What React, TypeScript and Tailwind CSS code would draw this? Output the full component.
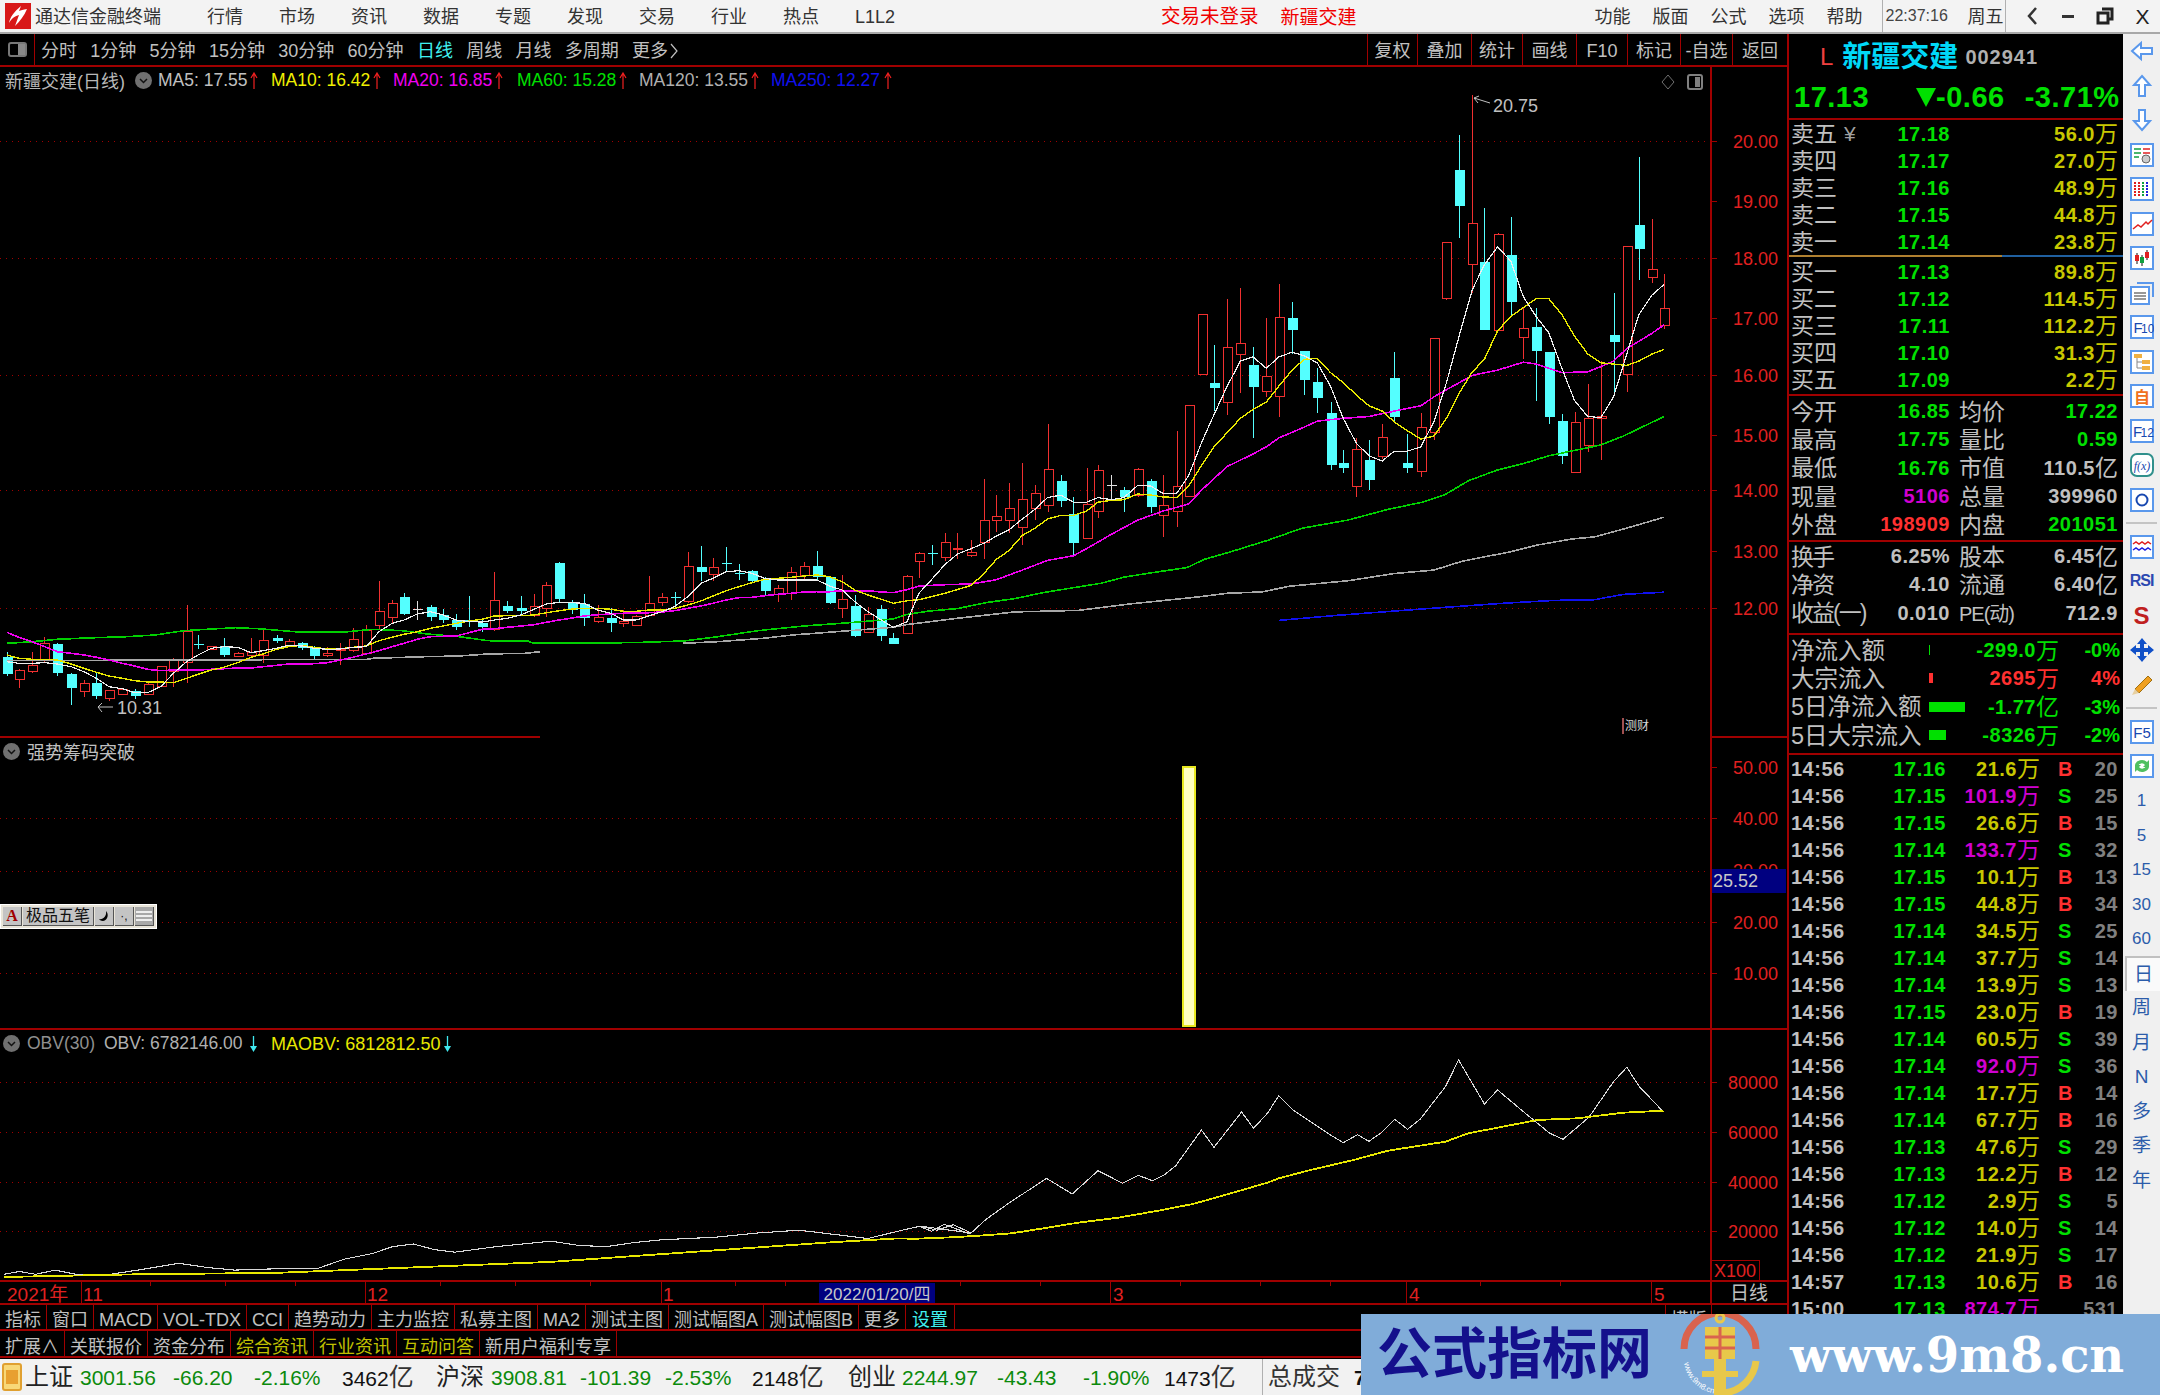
import type { ReactNode } from 'react'

type Candle = [number, 'r' | 'c' | 'w', number, number, number, number]
type Pt = [number, number]

const RED = '#f03030'
const CYAN = '#54ffff'
const LINE = 'border-[#a00000]'

// candles read off the left and right half of the chart, in crop coordinates
const leftCandles: Candle[] = [
  [12, 'c', 335, 352, 402, 408], [33, 'r', 388, 390, 418, 445], [56, 'r', 335, 375, 395, 400],
  [76, 'r', 290, 310, 362, 365], [100, 'c', 310, 312, 400, 408], [124, 'c', 400, 402, 445, 495],
  [146, 'r', 420, 430, 455, 472], [168, 'c', 395, 428, 468, 478], [190, 'r', 452, 452, 476, 482],
  [213, 'r', 445, 447, 462, 464], [235, 'c', 447, 452, 468, 478], [257, 'r', 430, 434, 462, 464],
  [280, 'r', 378, 380, 440, 442], [302, 'r', 355, 357, 395, 440], [325, 'r', 195, 275, 366, 430],
  [345, 'c', 285, 312, 314, 328], [368, 'r', 318, 320, 328, 330], [390, 'c', 293, 318, 346, 352],
  [414, 'r', 335, 340, 350, 352], [437, 'r', 293, 338, 345, 348], [458, 'r', 270, 300, 345, 370],
  [482, 'c', 285, 293, 302, 310], [503, 'r', 298, 303, 315, 320], [526, 'c', 305, 308, 325, 330],
  [547, 'c', 318, 322, 347, 358], [570, 'r', 320, 340, 345, 352], [593, 'r', 310, 328, 332, 375],
  [615, 'r', 265, 298, 330, 335], [638, 'r', 255, 270, 340, 345], [660, 'r', 122, 214, 255, 268],
  [683, 'r', 180, 190, 232, 248], [704, 'c', 158, 172, 222, 225], [727, 'w', 182, 208, 210, 240],
  [750, 'c', 195, 200, 230, 242], [772, 'c', 208, 225, 240, 248], [795, 'c', 222, 240, 262, 270],
  [817, 'c', 167, 240, 244, 262], [840, 'c', 235, 250, 262, 275], [861, 'r', 96, 182, 268, 272],
  [884, 'c', 182, 198, 213, 218], [907, 'c', 167, 204, 213, 228], [930, 'r', 163, 198, 225, 230],
  [952, 'r', 125, 137, 205, 230], [974, 'c', 67, 68, 178, 190], [997, 'c', 180, 188, 210, 222],
  [1018, 'c', 163, 192, 235, 257], [1041, 'r', 195, 232, 243, 250], [1064, 'c', 205, 235, 248, 275],
  [1086, 'r', 210, 245, 250, 262], [1108, 'r', 226, 228, 256, 258], [1130, 'r', 108, 190, 225, 228],
  [1153, 'r', 158, 172, 188, 198], [1175, 'c', 155, 172, 174, 205], [1198, 'r', 37, 78, 185, 188],
  [1221, 'c', 18, 82, 95, 122], [1242, 'r', 55, 82, 103, 122], [1265, 'c', 22, 68, 71, 95],
  [1287, 'c', 72, 99, 102, 120], [1310, 'c', 90, 92, 122, 125], [1332, 'c', 110, 120, 153, 168],
  [1355, 'r', 135, 146, 162, 185], [1378, 'r', 82, 96, 160, 180], [1400, 'r', 65, 78, 105, 120],
  [1423, 'c', 32, 78, 110, 122], [1445, 'c', 108, 110, 190, 193], [1467, 'r', 105, 177, 205, 235],
  [1489, 'c', 165, 198, 288, 292], [1512, 'r', 200, 222, 278, 280], [1535, 'c', 195, 208, 288, 302],
  [1556, 'c', 280, 294, 311, 312],
]

const rightCandles: Candle[] = [
  [12, 'r', 1390, 1392, 1552, 1552], [33, 'r', 1325, 1328, 1350, 1398], [56, 'c', 1305, 1326, 1330, 1360],
  [78, 'r', 1270, 1298, 1340, 1350], [100, 'r', 1272, 1315, 1318, 1345], [124, 'r', 1290, 1326, 1335, 1337],
  [146, 'r', 1120, 1236, 1298, 1345], [168, 'r', 1165, 1224, 1236, 1268], [190, 'r', 1130, 1202, 1236, 1270],
  [213, 'r', 1075, 1176, 1255, 1305], [235, 'r', 1138, 1160, 1202, 1235], [257, 'r', 965, 1092, 1194, 1212],
  [280, 'c', 1108, 1125, 1182, 1198], [302, 'c', 1170, 1218, 1300, 1337], [325, 'r', 1090, 1190, 1286, 1288],
  [345, 'r', 1082, 1096, 1210, 1228], [368, 'w', 1108, 1138, 1140, 1178], [390, 'c', 1142, 1150, 1170, 1212],
  [414, 'r', 1088, 1092, 1166, 1170], [437, 'c', 1120, 1125, 1198, 1215], [458, 'r', 1108, 1195, 1222, 1283],
  [482, 'r', 985, 1142, 1210, 1254], [503, 'r', 915, 915, 1168, 1170], [526, 'r', 660, 660, 828, 830],
  [547, 'c', 746, 852, 866, 930], [570, 'r', 615, 752, 905, 942], [593, 'r', 586, 740, 770, 880],
  [615, 'c', 750, 802, 862, 1005], [638, 'r', 670, 832, 875, 890], [660, 'r', 575, 668, 890, 945],
  [683, 'c', 625, 668, 704, 770], [704, 'c', 762, 762, 842, 885], [727, 'c', 810, 848, 892, 935],
  [750, 'c', 905, 936, 1082, 1095], [772, 'c', 1038, 1075, 1090, 1103], [795, 'r', 1005, 1038, 1140, 1170],
  [817, 'c', 1012, 1068, 1123, 1150], [840, 'r', 965, 1004, 1058, 1065], [861, 'c', 764, 836, 945, 960],
  [884, 'c', 995, 1075, 1090, 1102], [907, 'r', 935, 975, 1098, 1115], [930, 'r', 727, 727, 990, 1010],
  [952, 'r', 458, 458, 615, 620], [974, 'c', 158, 256, 356, 445], [997, 'r', 45, 404, 518, 600],
  [1018, 'c', 360, 512, 704, 704], [1041, 'r', 432, 434, 704, 706], [1064, 'c', 385, 492, 624, 660],
  [1086, 'r', 640, 698, 724, 785], [1108, 'c', 640, 693, 762, 902], [1130, 'c', 764, 764, 946, 965],
  [1153, 'c', 937, 958, 1055, 1078], [1175, 'r', 932, 962, 1102, 1102], [1198, 'r', 855, 950, 1025, 1045],
  [1221, 'r', 790, 946, 950, 1068], [1243, 'c', 600, 718, 737, 880], [1266, 'r', 470, 470, 828, 876],
  [1287, 'c', 217, 410, 477, 562], [1310, 'r', 393, 534, 555, 570], [1331, 'r', 545, 643, 690, 700],
]

const ma5A: Pt[] = [[12, 365], [33, 370], [56, 370], [78, 368], [100, 372], [124, 380], [146, 395], [168, 415], [190, 440], [213, 446], [235, 458], [257, 458], [280, 440], [302, 400], [325, 365], [345, 345], [368, 325], [390, 320], [414, 322], [437, 338], [458, 332], [482, 325], [503, 316], [526, 318], [547, 325], [570, 328], [593, 327], [615, 322], [638, 320], [660, 275], [683, 250], [704, 240], [727, 222], [750, 215], [772, 225], [795, 240], [817, 245], [840, 246], [861, 240], [884, 235], [907, 225], [930, 208], [952, 192], [974, 187], [997, 188], [1018, 190], [1041, 210], [1064, 220], [1086, 240], [1108, 240], [1130, 228], [1153, 215], [1175, 200], [1198, 170], [1221, 130], [1242, 115], [1265, 95], [1287, 92], [1310, 100], [1332, 115], [1355, 120], [1378, 120], [1400, 120], [1423, 120], [1445, 138], [1467, 150], [1489, 185], [1512, 215], [1535, 240], [1556, 262]]
const ma5B: Pt[] = [[12, 1520], [33, 1440], [56, 1400], [78, 1360], [100, 1330], [124, 1315], [146, 1300], [168, 1280], [190, 1262], [213, 1232], [235, 1205], [257, 1172], [280, 1165], [302, 1185], [325, 1185], [345, 1172], [368, 1178], [390, 1172], [414, 1138], [437, 1140], [458, 1160], [482, 1160], [503, 1110], [526, 1015], [547, 940], [570, 860], [593, 790], [615, 778], [638, 810], [660, 778], [683, 765], [704, 775], [727, 795], [750, 860], [772, 950], [795, 1020], [817, 1055], [840, 1070], [861, 1042], [884, 1042], [907, 1030], [930, 960], [952, 850], [974, 720], [997, 590], [1018, 520], [1041, 470], [1064, 510], [1086, 610], [1108, 665], [1130, 710], [1153, 810], [1175, 900], [1198, 945], [1221, 948], [1243, 890], [1266, 770], [1287, 660], [1310, 605], [1331, 575]]
const ma10A: Pt[] = [[12, 345], [33, 355], [56, 358], [78, 358], [100, 360], [124, 372], [146, 385], [168, 397], [190, 408], [213, 415], [235, 422], [257, 426], [280, 426], [302, 428], [325, 415], [345, 403], [368, 390], [390, 382], [414, 368], [437, 352], [458, 342], [482, 328], [503, 320], [526, 316], [547, 322], [570, 327], [593, 326], [615, 322], [638, 318], [660, 302], [683, 292], [704, 283], [727, 275], [750, 265], [772, 258], [795, 250], [817, 243], [840, 238], [861, 228], [884, 227], [907, 227], [930, 225], [952, 218], [974, 212], [997, 207], [1018, 205], [1041, 205], [1064, 208], [1086, 214], [1108, 214], [1130, 210], [1153, 210], [1175, 205], [1198, 195], [1221, 183], [1242, 168], [1265, 152], [1287, 140], [1310, 128], [1332, 118], [1355, 115], [1378, 112], [1400, 108], [1423, 105], [1445, 110], [1467, 125], [1489, 150], [1512, 165], [1535, 178], [1556, 190]]
const ma10B: Pt[] = [[12, 1461], [33, 1458], [78, 1440], [124, 1418], [146, 1385], [168, 1345], [190, 1320], [213, 1278], [235, 1258], [257, 1232], [280, 1222], [302, 1222], [325, 1210], [345, 1185], [368, 1180], [390, 1178], [414, 1162], [437, 1165], [458, 1170], [482, 1172], [503, 1140], [526, 1080], [547, 1030], [570, 990], [593, 950], [615, 925], [638, 905], [660, 860], [683, 815], [704, 785], [727, 782], [750, 822], [772, 850], [795, 885], [817, 915], [840, 930], [861, 960], [884, 985], [907, 1008], [930, 1000], [952, 950], [974, 880], [997, 820], [1018, 785], [1041, 705], [1064, 665], [1086, 640], [1108, 615], [1130, 615], [1153, 660], [1175, 720], [1198, 770], [1221, 795], [1243, 798], [1266, 802], [1287, 790], [1310, 770], [1331, 757]]
const ma20A: Pt[] = [[12, 277], [33, 292], [56, 305], [78, 320], [100, 335], [124, 340], [146, 345], [168, 352], [190, 360], [213, 370], [235, 378], [257, 388], [280, 392], [302, 390], [325, 390], [345, 390], [368, 388], [390, 386], [414, 384], [437, 384], [458, 380], [482, 376], [503, 372], [526, 372], [547, 371], [570, 368], [593, 360], [615, 352], [638, 342], [660, 332], [683, 320], [704, 310], [727, 298], [750, 290], [772, 289], [795, 288], [817, 278], [840, 268], [861, 266], [884, 262], [907, 258], [930, 254], [952, 247], [974, 240], [997, 234], [1018, 228], [1041, 224], [1064, 222], [1086, 220], [1108, 218], [1130, 218], [1153, 216], [1175, 212], [1198, 205], [1221, 198], [1242, 190], [1265, 180], [1287, 173], [1310, 172], [1332, 167], [1355, 163], [1378, 160], [1400, 156], [1423, 155], [1445, 155], [1467, 152], [1489, 152], [1512, 152], [1535, 156], [1556, 158]]
const ma20B: Pt[] = [[12, 1430], [33, 1420], [78, 1416], [124, 1414], [168, 1402], [213, 1375], [257, 1348], [302, 1335], [325, 1315], [368, 1275], [414, 1235], [458, 1210], [503, 1190], [526, 1150], [570, 1085], [615, 1050], [638, 1030], [660, 1005], [704, 975], [727, 958], [772, 950], [817, 945], [861, 930], [907, 915], [930, 890], [952, 870], [997, 830], [1041, 815], [1086, 793], [1108, 798], [1130, 810], [1153, 822], [1198, 820], [1221, 805], [1243, 790], [1266, 755], [1310, 712], [1331, 688]]
const ma60A: Pt[] = [[12, 310], [50, 306], [100, 298], [150, 294], [220, 290], [270, 285], [320, 272], [360, 268], [410, 263], [450, 266], [520, 276], [600, 276], [650, 268], [700, 272], [745, 282], [800, 290], [850, 302], [920, 303], [925, 308], [1030, 310], [1120, 307], [1190, 303], [1250, 290], [1320, 272], [1400, 258], [1480, 248], [1556, 237]]
const ma60B: Pt[] = [[10, 1500], [50, 1490], [100, 1483], [150, 1466], [200, 1455], [250, 1438], [300, 1425], [350, 1412], [390, 1395], [440, 1382], [500, 1368], [530, 1345], [580, 1322], [640, 1292], [700, 1258], [780, 1235], [850, 1205], [910, 1185], [950, 1163], [990, 1125], [1040, 1095], [1090, 1075], [1130, 1055], [1175, 1040], [1220, 1025], [1260, 1000], [1331, 945]]
const ma120A1: Pt[] = [[12, 362], [640, 358], [650, 355], [740, 350], [800, 348], [850, 342], [915, 340], [940, 335]]
const ma120A2: Pt[] = [[1190, 310], [1250, 305], [1330, 295], [1380, 285], [1480, 272], [1556, 262]]
const ma120B: Pt[] = [[10, 1528], [100, 1510], [200, 1492], [310, 1488], [400, 1470], [520, 1450], [570, 1440], [630, 1436], [680, 1420], [780, 1405], [860, 1385], [930, 1375], [980, 1350], [1060, 1325], [1110, 1305], [1170, 1288], [1210, 1282], [1265, 1258], [1331, 1227]]
const ma250B: Pt[] = [[660, 1516], [760, 1502], [860, 1490], [960, 1478], [1050, 1468], [1140, 1460], [1210, 1458], [1260, 1443], [1331, 1437]]

const obvLeft: Pt[] = [[3, 925], [14, 923], [26, 925], [40, 922], [55, 925], [80, 925], [100, 922], [130, 917], [150, 920], [170, 922], [200, 921], [230, 921], [250, 914], [270, 910], [285, 905], [300, 903], [315, 907], [330, 909], [360, 905], [400, 901], [420, 904], [440, 905], [460, 902], [480, 900], [500, 899], [520, 898], [550, 895], [580, 893], [605, 896], [630, 899], [655, 893], [668, 890], [680, 893], [692, 889], [705, 895]]
const obvRight: Pt[] = [[33, 588], [55, 604], [77, 583], [122, 612], [150, 568], [185, 525], [255, 445], [300, 492], [345, 422], [388, 460], [415, 436], [440, 452], [460, 435], [480, 408], [525, 300], [547, 352], [595, 246], [616, 295], [640, 250], [660, 197], [683, 238], [750, 315], [772, 338], [797, 314], [817, 334], [840, 306], [862, 268], [884, 298], [906, 268], [950, 170], [973, 90], [1018, 222], [1041, 180], [1088, 248], [1132, 310], [1155, 328], [1200, 262], [1243, 155], [1266, 112], [1288, 170], [1328, 242]]
const maobvLeft: Pt[] = [[3, 927], [100, 925], [200, 924], [300, 920], [400, 916], [500, 909], [600, 902], [650, 899]]
const maobvRight: Pt[] = [[30, 626], [90, 622], [130, 618], [195, 610], [250, 595], [310, 578], [380, 563], [450, 542], [510, 522], [560, 498], [640, 458], [660, 445], [710, 422], [790, 390], [850, 362], [950, 335], [990, 310], [1050, 290], [1110, 270], [1180, 265], [1260, 248], [1330, 242]]

const ax = (z: number) => z / 1.742
const ay = (z: number) => 540 + z / 3
const bx = (z: number) => 900 + z / 1.742
const by = (z: number) => 79 + z / 2.8
const a = (p: Pt[]) => p.map(([x, y]): Pt => [ax(x), ay(y)])
const b = (p: Pt[]) => p.map(([x, y]): Pt => [bx(x), by(y)])
const obvB = (p: Pt[]) => p.map(([x, y]): Pt => [bx(x), 1030 + y / 3])
const shrunk = (p: Pt[]) => p.map(([x, y]): Pt => [x * 1.3776, y * 1.3776])
const pts = (p: Pt[]) => p.map(([x, y]) => `${x.toFixed(1)},${y.toFixed(1)}`).join(' ')

function Line({ p, color, w = 1.2 }: { p: Pt[]; color: string; w?: number }) {
  return <polyline points={pts(p)} fill="none" stroke={color} strokeWidth={w} shapeRendering="crispEdges" />
}

function Bar({ c, fx, fy }: { c: Candle; fx: (n: number) => number; fy: (n: number) => number }) {
  const [zx, kind, hi, top, bot, lo] = c
  const x = Math.round(fx(zx))
  const y1 = fy(top)
  const y2 = fy(bot)
  const color = kind === 'r' ? RED : kind === 'c' ? CYAN : '#e0e0e0'
  return (
    <g shapeRendering="crispEdges">
      <line x1={x + 0.5} x2={x + 0.5} y1={fy(hi)} y2={y1} stroke={color} />
      <line x1={x + 0.5} x2={x + 0.5} y1={y2} y2={fy(lo)} stroke={color} />
      {kind === 'r' ? (
        <rect x={x - 4} y={y1} width={9} height={Math.max(y2 - y1, 1)} fill="#000" stroke={color} />
      ) : (
        <rect x={x - 4.5} y={y1} width={10} height={Math.max(y2 - y1, 1)} fill={color} />
      )}
    </g>
  )
}

function Grid({ lines, labels, right = 1711 }: { lines: number[]; labels: [string, number][]; right?: number }) {
  return (
    <>
      {lines.map((y) => (
        <line key={y} x1={0} x2={right} y1={y} y2={y} stroke="#a00000" strokeDasharray="1 5" shapeRendering="crispEdges" />
      ))}
      {labels.map(([t, y]) => (
        <g key={t}>
          <line x1={1711} x2={1717} y1={y} y2={y} stroke="#a00000" shapeRendering="crispEdges" />
          <text x={1778} y={y + 6.5} textAnchor="end" fontSize={18} fill="#e02020">{t}</text>
        </g>
      ))}
    </>
  )
}

function PaneHeader({ children }: { children: ReactNode }) {
  return <div className="absolute left-0 top-0 flex items-center h-[27px] text-[17.5px] leading-none whitespace-nowrap">{children}</div>
}

function Dot() {
  return (
    <span className="w-[17px] h-[17px] rounded-full bg-[#707070] flex items-center justify-center shrink-0">
      <svg width="11" height="11" viewBox="0 0 11 11"><path d="M2 4l3.5 3.5L9 4" fill="none" stroke="#111" strokeWidth="1.5" /></svg>
    </span>
  )
}

function Up() {
  return <svg width="8" height="18" viewBox="0 0 8 18" className="shrink-0"><path d="M4 17V2M1 6l3-5 3 5" fill="none" stroke="#f02020" strokeWidth="1.2" /></svg>
}

function Down({ color }: { color: string }) {
  return <svg width="9" height="18" viewBox="0 0 9 18" className="shrink-0"><path d="M4.5 1v12" stroke={color} strokeWidth="1.3" /><path d="M1 11h7l-3.5 6z" fill={color} /></svg>
}

function TitleBar() {
  const menu = ['行情', '市场', '资讯', '数据', '专题', '发现', '交易', '行业', '热点', 'L1L2']
  const right = ['功能', '版面', '公式', '选项', '帮助']
  return (
    <div className="h-[34px] bg-[#f3f3f3] border-b-2 border-[#a8a8a8] flex items-center text-[18px] leading-none text-[#333] whitespace-nowrap">
      <svg width="26" height="26" viewBox="0 0 26 26" className="ml-[5px] shrink-0">
        <rect width="26" height="26" fill="#d81818" />
        <path d="M16 3C9 9 5 14 4 20c3-5 6-7 10-8l-4 11c5-5 9-10 12-17-4 1-6 1-8 2z" fill="#fff" />
      </svg>
      <span className="ml-[4px] w-[126px] pt-[2px]">通达信金融终端</span>
      <div className="ml-[46px] flex gap-[36px] pt-[2px]">
        {menu.map((m) => <span key={m} className="w-[36px]">{m}</span>)}
      </div>
      <span className="ml-[270px] pt-[2px] text-[#f00000] text-[19.5px]">交易未登录</span>
      <span className="ml-[22px] pt-[2px] text-[#f00000] text-[19px]">新疆交建</span>
      <div className="ml-[238px] flex gap-[22px] pt-[2px]">
        {right.map((m) => <span key={m}>{m}</span>)}
      </div>
      <div className="ml-[19px] h-[32px] border-x border-[#b0b0b0] w-[124px] flex items-center pl-[3px]">
        <span className="text-[16px] w-[82px] text-[#444]">22:37:16</span>
        <span className="pt-[2px]">周五</span>
      </div>
      <div className="flex items-center text-[#222] font-bold">
        <svg width="14" height="22" viewBox="0 0 14 22" className="ml-[20px]"><path d="M10 3L3 11l7 8" fill="none" stroke="#333" strokeWidth="2.5" /></svg>
        <span className="ml-[22px] w-[12px] h-[3px] bg-[#333]" />
        <svg width="20" height="20" viewBox="0 0 20 20" className="ml-[21px]"><path d="M7 3h10v10h-4M3 7h10v10H3z" fill="none" stroke="#222" strokeWidth="3" /></svg>
        <span className="ml-[21px] text-[21px] font-normal">X</span>
      </div>
    </div>
  )
}

function Toolbar() {
  const periods = ['分时', '1分钟', '5分钟', '15分钟', '30分钟', '60分钟', '日线', '周线', '月线', '多周期']
  const tools: [string, string][] = [['复权', 'w-[50px]'], ['叠加', 'w-[54px]'], ['统计', 'w-[51px]'], ['画线', 'w-[54px]'], ['F10', 'w-[51px]'], ['标记', 'w-[53px]'], ['-自选', 'w-[52px]'], ['返回', 'w-[55px]']]
  return (
    <div className={`h-[33px] shrink-0 border-b-2 ${LINE} flex items-center text-[18px] leading-none text-[#c0c0c0] whitespace-nowrap`}>
      <div className={`w-[35px] h-full border-r ${LINE} flex items-center justify-center`}>
        <span className="w-[19px] h-[15px] border-2 border-[#777] rounded-[3px] flex justify-end">
          <span className="w-[7px] h-full bg-[#888]" />
        </span>
      </div>
      <div className="ml-[6px] pt-[3px] flex items-center gap-[13.3px]">
        {periods.map((p) => <span key={p} className={p === '日线' ? 'text-[#40f0f0]' : ''}>{p}</span>)}
        <span className="flex items-center">
          更多
          <svg width="9" height="16" viewBox="0 0 9 16" className="ml-[2px]"><path d="M1 1l6 7-6 7" fill="none" stroke="#c0c0c0" strokeWidth="1.2" /></svg>
        </span>
      </div>
      <div className="ml-auto flex h-full">
        {tools.map(([t, w]) => (
          <span key={t} className={`${w} pt-[3px] border-l ${LINE} flex items-center justify-center`}>{t}</span>
        ))}
      </div>
    </div>
  )
}

function MainPane() {
  const labels: [string, number][] = [['20.00', 141], ['19.00', 201], ['18.00', 258], ['17.00', 318], ['16.00', 375], ['15.00', 435], ['14.00', 490], ['13.00', 551], ['12.00', 608]]
  return (
    <div className="relative h-[671px] shrink-0">
      <svg width="1787" height="671" viewBox="0 67 1787 671" className="block [font-family:'Liberation_Sans',sans-serif]">
        <Grid lines={[141, 258, 375, 490, 608]} labels={labels} />
        {leftCandles.map((c) => <Bar key={`a${c[0]}`} c={c} fx={ax} fy={ay} />)}
        {rightCandles.map((c) => <Bar key={`b${c[0]}`} c={c} fx={bx} fy={by} />)}
        <Line p={a(ma120A1)} color="#a8a8a8" w={1.6} />
        <Line p={[...a(ma120A2), ...b(ma120B)]} color="#a8a8a8" w={1.6} />
        <Line p={b(ma250B)} color="#1010f0" w={1.6} />
        <Line p={[...a(ma60A), ...b(ma60B)]} color="#00d000" w={1.6} />
        <Line p={[...a(ma20A), ...b(ma20B)]} color="#f000f0" w={1.6} />
        <Line p={[...a(ma10A), ...b(ma10B)]} color="#e8e800" w={1.4} />
        <Line p={[...a(ma5A), ...b(ma5B)]} color="#eeeeee" w={1.2} />
        <path d="M1490 103l-16-5m0 0l4 5m-4-5l5-2" fill="none" stroke="#c0c0c0" />
        <text x={1493} y={112} fontSize={18} fill="#c0c0c0">20.75</text>
        <path d="M113 707H98m0 0l4-4m-4 4l4 5" fill="none" stroke="#c0c0c0" />
        <text x={117} y={714} fontSize={18} fill="#c0c0c0">10.31</text>
        <line x1={0} x2={540} y1={737} y2={737} stroke="#a00000" strokeWidth={2} />
        <line x1={1711} x2={1787} y1={737} y2={737} stroke="#a00000" strokeWidth={2} />
        <line x1={1711} x2={1711} y1={67} y2={738} stroke="#a00000" strokeWidth={2} />
        <path d="M1668 75l6 7-6 7-6-7z" fill="none" stroke="#707070" />
        <rect x={1688} y={75} width={14} height={14} rx={2} fill="none" stroke="#808080" strokeWidth={2} />
        <rect x={1695} y={77} width={5} height={10} fill="#808080" />
      </svg>
      <PaneHeader>
        <span className="ml-[5px] pt-[2px] text-[18px] text-[#b8b8b8]">新疆交建(日线)</span>
        <span className="ml-[10px] mr-[6px]"><Dot /></span>
        <span className="text-[#c0c0c0] w-[89px]">MA5: 17.55</span>
        <span className="ml-[3px]"><Up /></span>
        <span className="ml-[13px] text-[#f0f000] w-[99px]">MA10: 16.42</span>
        <span className="ml-[3px]"><Up /></span>
        <span className="ml-[12px] text-[#f000f0] w-[99px]">MA20: 16.85</span>
        <span className="ml-[3px]"><Up /></span>
        <span className="ml-[14px] text-[#00e000] w-[99px]">MA60: 15.28</span>
        <span className="ml-[3px]"><Up /></span>
        <span className="ml-[12px] text-[#b0b0b0] w-[109px]">MA120: 13.55</span>
        <span className="ml-[3px]"><Up /></span>
        <span className="ml-[12px] text-[#1010f0] w-[110px]">MA250: 12.27</span>
        <span className="ml-[3px]"><Up /></span>
      </PaneHeader>
      <span className="absolute left-[1622px] top-[651px] w-[28px] h-[16px] flex items-center justify-center text-[12px] leading-none text-[#d8d8d8] border-l-2 border-[#a05050]">测财</span>
    </div>
  )
}

function ChipPane() {
  const labels: [string, number][] = [['50.00', 767], ['40.00', 818], ['30.00', 870], ['20.00', 922], ['10.00', 973]]
  return (
    <div className="relative h-[292px] shrink-0 border-b-2 border-[#a00000]">
      <svg width="1787" height="290" viewBox="0 738 1787 290" className="block [font-family:'Liberation_Sans',sans-serif]">
        <Grid lines={[818, 871, 922, 973]} labels={labels} />
        <rect x={1183} y={767} width={12} height={259} fill="#ffffc0" stroke="#e8e820" strokeWidth={2} shapeRendering="crispEdges" />
        <line x1={1711} x2={1711} y1={738} y2={1030} stroke="#a00000" strokeWidth={2} />
      </svg>
      <PaneHeader>
        <span className="ml-[3px]"><Dot /></span>
        <span className="ml-[7px] pt-[2px] text-[18px] text-[#c0c0c0]">强势筹码突破</span>
      </PaneHeader>
      <span className="absolute left-[1712px] top-[131px] w-[74px] h-[24px] bg-[#000080] text-[#c8c8c8] text-[18px] leading-none flex items-center pl-[1px] [font-family:'Liberation_Sans',sans-serif]">25.52</span>
      <div className="absolute left-0 top-[166px] w-[157px] h-[25px] bg-[#e8e4d8] border border-[#fff] flex items-center gap-[1px] px-[2px] text-[#111]">
        <span className="w-[19px] h-[19px] bg-[#c4c4c4] border-r border-b border-[#555] flex items-center justify-center text-[#a00000] font-bold text-[16px] leading-none [font-family:'Liberation_Serif',serif]">A</span>
        <span className="w-[71px] h-[19px] bg-[#c4c4c4] border-r border-b border-[#555] text-[16px] leading-none flex items-center justify-center">极品五笔</span>
        <span className="w-[19px] h-[19px] bg-[#c4c4c4] border-r border-b border-[#555] flex items-center justify-center">
          <svg width="13" height="13" viewBox="0 0 13 13"><path d="M8 1c3 3 2 9-3 10-2 0-3-1-4-2 4 1 8-3 7-8z" fill="#000" /></svg>
        </span>
        <span className="w-[19px] h-[19px] bg-[#c4c4c4] border-r border-b border-[#555] flex items-center justify-center text-[12px] leading-none">·,</span>
        <span className="w-[19px] h-[19px] bg-[#a8a8a8] border-r border-b border-[#555] flex flex-col justify-center gap-[2px] px-[1px]">
          <span className="h-[2px] bg-[#eee]" /><span className="h-[2px] bg-[#eee]" /><span className="h-[2px] bg-[#eee]" />
        </span>
      </div>
    </div>
  )
}

function ObvPane() {
  const labels: [string, number][] = [['80000', 1082], ['60000', 1132], ['40000', 1182], ['20000', 1231]]
  return (
    <div className="relative h-[252px] shrink-0 border-b-2 border-[#a00000]">
      <svg width="1787" height="250" viewBox="0 1030 1787 250" className="block [font-family:'Liberation_Sans',sans-serif]">
        <Grid lines={[1082, 1132, 1182, 1231]} labels={labels} />
        <Line p={[...shrunk(obvLeft), ...obvB(obvRight)]} color="#d8d8d8" w={1.1} />
        <Line p={[...shrunk(maobvLeft), ...obvB(maobvRight)]} color="#e8e800" w={1.8} />
        <line x1={1711} x2={1711} y1={1030} y2={1282} stroke="#a00000" strokeWidth={2} />
        <rect x={1711.5} y={1260} width={48} height={20} fill="none" stroke="#a00000" shapeRendering="crispEdges" />
        <text x={1714} y={1277} fontSize={18} fill="#e02020">X100</text>
      </svg>
      <PaneHeader>
        <span className="ml-[3px]"><Dot /></span>
        <span className="ml-[7px] text-[#909090] w-[77px] text-[17.5px]">OBV(30)</span>
        <span className="text-[#b0b0b0] w-[143px] text-[17.5px]">OBV: 6782146.00</span>
        <span className="ml-[2px]"><Down color="#40e8f0" /></span>
        <span className="ml-[13px] text-[#e8e800] w-[170px] text-[18px]">MAOBV: 6812812.50</span>
        <span className="ml-[2px]"><Down color="#40e8f0" /></span>
      </PaneHeader>
    </div>
  )
}

function DateAxis() {
  const ticks = [81, 365, 661, 1110, 1406, 1651]
  const small = [150, 225, 295, 440, 515, 590, 735, 785, 960, 1040, 1180, 1260, 1330, 1480, 1560]
  const names: [string, number][] = [['11', 83], ['12', 367], ['1', 663], ['3', 1113], ['4', 1409], ['5', 1654]]
  return (
    <div className="relative h-[23px] shrink-0 border-b-2 border-[#a00000]">
      <svg width="1787" height="21" viewBox="0 0 1787 21" className="block overflow-visible">
        {ticks.map((x) => <line key={x} x1={x} x2={x} y1={0} y2={21} stroke="#a00000" shapeRendering="crispEdges" />)}
        {small.map((x) => <line key={x} x1={x} x2={x} y1={0} y2={4} stroke="#a00000" shapeRendering="crispEdges" />)}
        <line x1={1711} x2={1711} y1={0} y2={21} stroke="#a00000" strokeWidth={2} />
        {names.map(([t, x]) => <text key={t} x={x} y={19} fontSize={19} fill="#e02020">{t}</text>)}
      </svg>
      <span className="absolute left-[7px] top-[3px] text-[19px] leading-none text-[#e02020]">2021年</span>
      <span className="absolute left-[819px] top-[1px] w-[116px] h-[20px] pt-[2px] bg-[#000080] text-[#c8c8c8] text-[17px] leading-none flex items-center justify-center">2022/01/20/四</span>
      <span className="absolute left-[1712px] top-[2px] w-[74px] text-center text-[19px] leading-none text-[#c0c0c0]">日线</span>
    </div>
  )
}

function Tabs() {
  const row1 = ['指标', '窗口', 'MACD', 'VOL-TDX', 'CCI', '趋势动力', '主力监控', '私募主图', 'MA2', '测试主图', '测试幅图A', '测试幅图B', '更多']
  const row2 = ['扩展∧', '关联报价', '资金分布']
  const row2b = ['综合资讯', '行业资讯', '互动问答']
  const cell = `h-full px-[5px] pt-[6px] border-r ${LINE} flex items-center`
  return (
    <div className="text-[18px] leading-none text-[#c0c0c0] whitespace-nowrap">
      <div className={`h-[26px] border-b-2 ${LINE} flex`}>
        {row1.map((t) => <span key={t} className={cell}>{t}</span>)}
        <span className={`${cell} text-[#40f0f0] px-[6px]`}>设置</span>
        <span className={`ml-auto h-full w-[46px] pt-[6px] border-l ${LINE} flex items-center justify-center`}>模版</span>
        <span className={`h-full w-[76px] border-l ${LINE}`} />
      </div>
      <div className={`h-[27px] border-b-2 ${LINE} flex`}>
        {row2.map((t) => <span key={t} className={cell}>{t}</span>)}
        {row2b.map((t) => <span key={t} className={`${cell} text-[#c0c000]`}>{t}</span>)}
        <span className={cell}>新用户福利专享</span>
      </div>
    </div>
  )
}

const digits = "[font-family:'Liberation_Sans',sans-serif] font-bold"

function Wan({ v, unit = '万', cls }: { v: string; unit?: string; cls: string }) {
  return (
    <span className={`inline-flex items-center ${cls}`}>
      <span className={`${digits} text-[20px] tracking-[0.5px]`}>{v}</span>
      <span className="text-[23px] font-normal pt-[2px]">{unit}</span>
    </span>
  )
}

function Book() {
  const asks = [['卖五', '17.18', '56.0'], ['卖四', '17.17', '27.0'], ['卖三', '17.16', '48.9'], ['卖二', '17.15', '44.8'], ['卖一', '17.14', '23.8']]
  const bids = [['买一', '17.13', '89.8'], ['买二', '17.12', '114.5'], ['买三', '17.11', '112.2'], ['买四', '17.10', '31.3'], ['买五', '17.09', '2.2']]
  const row = ([l, p, v]: string[]) => (
    <div key={l} className="h-[27px] flex items-center pl-[2px] pr-[5px]">
      <span className="w-[48px] pt-[2px] text-[23px] text-[#c0c0c0]">{l}</span>
      <span className="w-[22px] pl-[5px] text-[#a0a0a0] text-[21px]">{l === '卖五' ? '¥' : ''}</span>
      <span className={`${digits} w-[89px] text-right text-[20px] text-[#00e000] tracking-[0.5px]`}>{p}</span>
      <span className="ml-auto"><Wan v={v} cls="text-[#c8c800]" /></span>
    </div>
  )
  return (
    <>
      <div className="h-[137px]">
        {asks.map(row)}
        <div className="flex h-[2px]">
          <span className="w-[213px] bg-[#b08030]" />
          <span className="flex-1 bg-[#2060a0]" />
        </div>
      </div>
      <div className={`h-[139px] pt-[1px] border-b-2 ${LINE}`}>{bids.map(row)}</div>
    </>
  )
}

function Quote() {
  const g = 'text-[#00e000]'
  const w = 'text-[#c0c0c0]'
  const rows: [string, string, string, string, string, string][] = [
    ['今开', '16.85', g, '均价', '17.22', g],
    ['最高', '17.75', g, '量比', '0.59', g],
    ['最低', '16.76', g, '市值', '110.5亿', w],
    ['现量', '5106', 'text-[#d000d0]', '总量', '399960', w],
    ['外盘', '198909', 'text-[#ff3030]', '内盘', '201051', g],
  ]
  const stats: [string, string, string, string][] = [
    ['换手', '6.25%', '股本', '6.45亿'],
    ['净资', '4.10', '流通', '6.40亿'],
    ['收益(一)', '0.010', 'PE(动)', '712.9'],
  ]
  const val = (v: string, cls: string) =>
    v.endsWith('亿') ? (
      <Wan v={v.slice(0, -1)} unit="亿" cls={cls} />
    ) : (
      <span className={`${digits} text-[20px] tracking-[0.5px] ${cls}`}>{v}</span>
    )
  return (
    <>
      <div className={`h-[146px] pt-[1px] border-b-2 ${LINE}`}>
        {rows.map(([a1, v1, c1, a2, v2, c2]) => (
          <div key={a1} className="h-[28.3px] flex items-center pl-[2px] pr-[5px]">
            <span className="w-[159px] flex justify-between items-center">
              <span className="text-[23px] pt-[2px] text-[#c0c0c0]">{a1}</span>
              {val(v1, c1)}
            </span>
            <span className="ml-[9px] flex-1 flex justify-between items-center">
              <span className="text-[23px] pt-[2px] text-[#c0c0c0]">{a2}</span>
              {val(v2, c2)}
            </span>
          </div>
        ))}
      </div>
      <div className={`h-[93px] border-b-2 ${LINE}`}>
        {stats.map(([a1, v1, a2, v2]) => (
          <div key={a1} className="h-[28.3px] flex items-center pl-[2px] pr-[5px]">
            <span className="w-[159px] flex justify-between items-center">
              <span className="text-[23px] pt-[2px] text-[#c0c0c0] whitespace-nowrap tracking-[-2px]">{a1}</span>
              {val(v1, w)}
            </span>
            <span className="ml-[9px] flex-1 flex justify-between items-center">
              <span className={`pt-[2px] text-[#c0c0c0] whitespace-nowrap ${a2.startsWith('PE') ? 'text-[20px] tracking-[-1px]' : 'text-[23px]'}`}>{a2}</span>
              {val(v2, w)}
            </span>
          </div>
        ))}
      </div>
    </>
  )
}

function Flows() {
  const rows = [
    { l: '净流入额', bar: 1, bc: 'bg-[#00e000]', v: '-299.0', u: '万', c: 'text-[#00e000]', p: '-0%' },
    { l: '大宗流入', bar: 4, bc: 'bg-[#ff3030]', v: '2695', u: '万', c: 'text-[#ff3030]', p: '4%' },
    { l: '5日净流入额', bar: 36, bc: 'bg-[#00e000]', v: '-1.77', u: '亿', c: 'text-[#00e000]', p: '-3%' },
    { l: '5日大宗流入', bar: 17, bc: 'bg-[#00e000]', v: '-8326', u: '万', c: 'text-[#00e000]', p: '-2%' },
  ]
  return (
    <div className={`h-[120px] pt-[1px] border-b-2 ${LINE}`}>
      {rows.map((r) => (
        <div key={r.l} className="h-[28.3px] flex items-center pl-[2px] pr-[3px]">
          <span className="w-[138px] pt-[3px] text-[#c0c0c0] whitespace-nowrap text-[23.5px]">{r.l}</span>
          <span className="w-[36px] flex items-center">
            <span className={`${r.bc} h-[10px]`} style={{ width: r.bar }} />
          </span>
          <span className="w-[94px] text-right"><Wan v={r.v} unit={r.u} cls={r.c} /></span>
          <span className={`${digits} ml-auto text-[20px] ${r.c}`}>{r.p}</span>
        </div>
      ))}
    </div>
  )
}

function Trades() {
  const rows: [string, string, string, string, string, boolean?][] = [
    ['14:56', '17.16', '21.6', 'B', '20'], ['14:56', '17.15', '101.9', 'S', '25', true], ['14:56', '17.15', '26.6', 'B', '15'],
    ['14:56', '17.14', '133.7', 'S', '32', true], ['14:56', '17.15', '10.1', 'B', '13'], ['14:56', '17.15', '44.8', 'B', '34'],
    ['14:56', '17.14', '34.5', 'S', '25'], ['14:56', '17.14', '37.7', 'S', '14'], ['14:56', '17.14', '13.9', 'S', '13'],
    ['14:56', '17.15', '23.0', 'B', '19'], ['14:56', '17.14', '60.5', 'S', '39'], ['14:56', '17.14', '92.0', 'S', '36', true],
    ['14:56', '17.14', '17.7', 'B', '14'], ['14:56', '17.14', '67.7', 'B', '16'], ['14:56', '17.13', '47.6', 'S', '29'],
    ['14:56', '17.13', '12.2', 'B', '12'], ['14:56', '17.12', '2.9', 'S', '5'], ['14:56', '17.12', '14.0', 'S', '14'],
    ['14:56', '17.12', '21.9', 'S', '17'], ['14:57', '17.13', '10.6', 'B', '16'], ['15:00', '17.13', '874.7', '', '531', true],
  ]
  return (
    <div className="pl-[2px] pr-[5px]">
      {rows.map(([t, p, v, s, n, big], i) => (
        <div key={i} className="h-[27px] flex items-center">
          <span className={`${digits} w-[52px] text-[20px] tracking-[0.5px] text-[#c0c0c0]`}>{t}</span>
          <span className={`${digits} w-[103px] text-right text-[20px] tracking-[0.5px] text-[#00e000]`}>{p}</span>
          <span className="w-[94px] text-right"><Wan v={v} cls={big ? 'text-[#d000d0]' : 'text-[#c8c800]'} /></span>
          <span className={`${digits} ml-[18px] w-[14px] text-[20px] ${s === 'B' ? 'text-[#ff3030]' : 'text-[#00e000]'}`}>{s}</span>
          <span className={`${digits} ml-auto text-[20px] tracking-[0.5px] text-[#808080]`}>{n}</span>
        </div>
      ))}
    </div>
  )
}

function QuotePanel() {
  return (
    <div className={`w-[336px] shrink-0 h-full overflow-hidden border-l-2 ${LINE} leading-none`}>
      <div className={`h-[86px] border-b-2 ${LINE}`}>
        <div className="h-[46px] flex items-center">
          <span className={`${digits} ml-[31px] text-[24px] font-normal text-[#f04040]`}>L</span>
          <span className="ml-[9px] text-[29px] text-[#00d8f8] font-bold whitespace-nowrap">新疆交建</span>
          <span className={`${digits} ml-[7px] text-[20px] tracking-[1px] text-[#b0b0b0]`}>002941</span>
        </div>
        <div className={`${digits} h-[34px] flex items-center text-[29px] text-[#00e000] whitespace-nowrap`}>
          <span className="ml-[5px] tracking-[0.5px]">17.13</span>
          <svg width="20" height="20" viewBox="0 0 20 20" className="ml-[47px]"><path d="M0 1h20L10 20z" fill="#00e000" /></svg>
          <span className="tracking-[0.5px]">-0.66</span>
          <span className="ml-[20px] tracking-[0.5px]">-3.71%</span>
        </div>
      </div>
      <Book />
      <Quote />
      <Flows />
      <Trades />
    </div>
  )
}

function Sq({ children }: { children: ReactNode }) {
  return (
    <svg width="24" height="24" viewBox="0 0 24 24">
      <rect x="1" y="1" width="22" height="22" fill="#fff" stroke="#5a98ec" strokeWidth="2" />
      {children}
    </svg>
  )
}

function SideBar() {
  const sep = <div className="h-[12.5px] flex items-center px-[3px]"><span className="w-full h-[2px] bg-[#c4c4c4]" /></div>
  const item = (node: ReactNode, key: string) => (
    <div key={key} className="h-[34.5px] flex items-center justify-center">{node}</div>
  )
  const arrow = (d: string) => (
    <svg width="24" height="24" viewBox="0 0 24 24"><path d={d} fill="#fff" stroke="#5a98ec" strokeWidth="2" /></svg>
  )
  const label = (t: string, big = false) => (
    <span className={`text-[#2c5caa] leading-none ${big ? 'text-[19px]' : "text-[17px] [font-family:'Liberation_Sans',sans-serif]"}`}>{t}</span>
  )
  const top: [string, ReactNode][] = [
    ['l', arrow('M2 12l9-8v5h11v6H11v5z')],
    ['u', arrow('M12 2l8 9h-5v11H9V11H4z')],
    ['d', arrow('M12 22l8-9h-5V2H9v11H4z')],
    ['t1', <Sq><path d="M4 6h7M4 10h7M4 14h5" stroke="#10a040" strokeWidth="1.5" /><path d="M13 6h7M13 10h7" stroke="#e02020" strokeWidth="1.5" /><circle cx="16" cy="16" r="4" fill="#ccc" stroke="#666" /></Sq>],
    ['t2', <Sq><path d="M5 5v14M9 5v14" stroke="#e02020" strokeWidth="2" strokeDasharray="2 1" /><path d="M13 5v14" stroke="#10a040" strokeWidth="2" strokeDasharray="2 1" /><path d="M17 5v14" stroke="#2020e0" strokeWidth="2" strokeDasharray="2 1" /></Sq>],
    ['t3', <Sq><path d="M3 17l5-4 3 2 5-5 2 2 4-4" fill="none" stroke="#e02020" strokeWidth="1.5" /></Sq>],
    ['t4', <Sq><path d="M7 7v11M17 4v10M12 9v11" stroke="#111" /><rect x="5" y="9" width="4" height="6" fill="#e02020" /><rect x="10" y="11" width="4" height="6" fill="#10a040" /><rect x="15" y="6" width="4" height="6" fill="#e02020" /></Sq>],
    ['t5', <svg width="24" height="24" viewBox="0 0 24 24"><path d="M7 2h16v14" fill="none" stroke="#5a98ec" strokeWidth="2" /><rect x="1" y="6" width="18" height="17" fill="#fff" stroke="#5a98ec" strokeWidth="2" /><path d="M4 12h12M4 15h12M4 18h12" stroke="#777" strokeWidth="1.5" /></svg>],
    ['fio', <Sq><text x="3.5" y="18" fontSize="15" fill="#1848b0" fontFamily="Liberation Sans">F</text><text x="11" y="18" fontSize="12" fill="#1848b0" fontFamily="Liberation Sans">10</text></Sq>],
    ['tree', <Sq><rect x="4" y="4" width="8" height="4" fill="#f0b040" /><rect x="12" y="10" width="8" height="4" fill="#f0b040" /><rect x="12" y="16" width="8" height="4" fill="#f0b040" /><path d="M7 8v10h5M7 12h5" fill="none" stroke="#888" /></Sq>],
    ['zi', <Sq><text x="12" y="18.5" textAnchor="middle" fontSize="16" fill="#f07020" fontWeight="bold" fontFamily="Noto Sans CJK SC">自</text></Sq>],
    ['f12', <Sq><text x="3" y="18" fontSize="15" fill="#1848b0" fontFamily="Liberation Sans">F</text><text x="10.5" y="18" fontSize="12" fill="#1848b0" fontFamily="Liberation Sans">12</text></Sq>],
    ['fx', <svg width="24" height="24" viewBox="0 0 24 24"><rect x="1" y="1" width="22" height="22" rx="6" fill="#fff" stroke="#30908c" strokeWidth="2" /><text x="12" y="17" textAnchor="middle" fontSize="12" fontStyle="italic" fill="#1848b0" fontFamily="Liberation Serif">f(x)</text></svg>],
    ['o', <Sq><circle cx="12" cy="12" r="5.5" fill="#fff" stroke="#1848b0" strokeWidth="2" /></Sq>],
  ]
  const mid: [string, ReactNode][] = [
    ['wave', <Sq><path d="M3 9l3-2 3 2 3-2 3 2 3-2 3 2" fill="none" stroke="#e02020" strokeWidth="1.5" /><path d="M3 15l3-2 3 2 3-2 3 2 3-2 3 2" fill="none" stroke="#2020e0" strokeWidth="1.5" /></Sq>],
    ['rsi', <span className={`${digits} text-[16px] text-[#2c48b0] tracking-[-1px] leading-none`}>RSI</span>],
    ['s', <span className={`${digits} text-[24px] text-[#c02020] leading-none`}>S</span>],
    ['move', <svg width="24" height="24" viewBox="0 0 24 24"><path d="M12 0l5 6h-3v4h4V7l6 5-6 5v-3h-4v4h3l-5 6-5-6h3v-4H6v3l-6-5 6-5v3h4V6H7z" fill="#1050c8" /></svg>],
    ['pen', <svg width="24" height="24" viewBox="0 0 24 24"><path d="M5 16L18 3l4 4L9 20z" fill="#f0a020" stroke="#a07010" /><path d="M5 16l-3 6 7-2z" fill="#e8d0a0" /></svg>],
  ]
  const low: [string, ReactNode][] = [
    ['f5', <Sq><text x="12" y="18" textAnchor="middle" fontSize="15" fill="#1848b0" fontFamily="Liberation Sans">F5</text></Sq>],
    ['re', <Sq><path d="M5 11a7 6 0 0 1 12-3l2-2v7h-6l2-2a4 4 0 0 0-7 1z" fill="#50c060" /><path d="M19 13a7 6 0 0 1-12 3l-2 2v-7h6l-2 2a4 4 0 0 0 7-1z" fill="#50c060" /></Sq>],
  ]
  return (
    <div className="w-[37px] h-full bg-[#f0f0f0] shrink-0">
      {top.map(([k, n]) => item(n, k))}
      {sep}
      {mid.map(([k, n]) => item(n, k))}
      {sep}
      {low.map(([k, n]) => item(n, k))}
      {['1', '5', '15', '30', '60'].map((t) => item(label(t), t))}
      <div className="h-[34.5px] ml-[2px] flex items-center justify-center bg-[#fafafa] border-t-2 border-l-2 border-[#c0c0c0]">{label('日', true)}</div>
      {['周', '月', 'N', '多', '季', '年'].map((t) => item(label(t, true), t))}
    </div>
  )
}

function StatusBar() {
  const g = 'text-[#0c8a0c]'
  const items: [string, number, string][] = [
    ['3001.56', 93, g], ['-66.20', 81, g], ['-2.16%', 88, g], ['3462亿', 94, 'text-[#111]'],
    ['沪深', 55, ''], ['3908.81', 89, g], ['-101.39', 85, g], ['-2.53%', 87, g], ['2148亿', 96, 'text-[#111]'],
    ['创业', 54, ''], ['2244.97', 95, g], ['-43.43', 86, g], ['-1.90%', 81, g], ['1473亿', 98, 'text-[#111]'],
  ]
  const show = (t: string) => {
    if (t.endsWith('亿')) return <>{t.slice(0, -1)}<span className="text-[25px] text-[#333]">亿</span></>
    return t
  }
  return (
    <div className="h-[36px] bg-[#f2f2f2] flex items-center text-[21px] leading-none whitespace-nowrap">
      <span className="ml-[2px] w-[20px] h-[28px] border-2 border-[#e0a030] rounded-[3px] bg-[#f8d878] flex items-center justify-center">
        <span className="w-[12px] h-[14px] bg-[#e8a030]" />
      </span>
      <span className="ml-[3px] w-[55px] text-[24px] text-[#222]">上证</span>
      {items.map(([t, w, c]) => (
        <span key={t} style={{ width: w }} className={`shrink-0 ${t.length === 2 ? 'text-[24px] text-[#222]' : c}`}>{show(t)}</span>
      ))}
      <span className="h-full border-l border-[#b0b0b0] pl-[5px] flex items-center text-[24px] text-[#333]">总成交<span className="ml-[14px] text-[21px] font-bold text-[#111]">7</span></span>
    </div>
  )
}

function Watermark() {
  return (
    <div className="absolute right-0 bottom-0 w-[799px] h-[81px] bg-[#80acd9] flex items-center overflow-hidden">
      <span className="ml-[16px] w-[284px] text-[55px] leading-none font-bold text-[#14108c] whitespace-nowrap">公式指标网</span>
      <svg width="84" height="84" viewBox="0 0 84 84" className="ml-[17px] shrink-0">
        <path d="M6 36A36 36 0 0 1 78 36" fill="none" stroke="#d9634e" strokeWidth="7" />
        <path d="M78 48A36 36 0 0 1 46 80" fill="none" stroke="#e8c84a" strokeWidth="7" />
        <circle cx="42" cy="5" r="4" fill="none" stroke="#e8c84a" strokeWidth="3" />
        <rect x="27" y="14" width="30" height="32" fill="#e8c84a" />
        <path d="M27 24h30M27 35h30M42 14v32" stroke="#d9634e" strokeWidth="3" />
        <path d="M36 46h12v36H36zM24 58h36v6H24z" fill="#e8c84a" />
        <path id="wm-ring" d="M6 50A37 37 0 0 0 40 81" fill="none" />
        <text fontSize="8" fill="#fff" fontFamily="Liberation Sans"><textPath href="#wm-ring">www.9m8.cn</textPath></text>
      </svg>
      <span className="ml-[28px] text-[48px] leading-none font-bold text-white [font-family:'DejaVu_Serif',serif] whitespace-nowrap">www.9m8.cn</span>
    </div>
  )
}

export default function App() {
  return (
    <div className="relative w-[2160px] h-[1395px] bg-black overflow-hidden [font-family:'Liberation_Sans','Noto_Sans_CJK_SC',sans-serif]">
      <TitleBar />
      <div className="flex h-[1325px]">
        <div className="w-[1787px] shrink-0 flex flex-col">
          <Toolbar />
          <MainPane />
          <ChipPane />
          <ObvPane />
          <DateAxis />
          <Tabs />
        </div>
        <QuotePanel />
        <SideBar />
      </div>
      <StatusBar />
      <Watermark />
    </div>
  )
}
